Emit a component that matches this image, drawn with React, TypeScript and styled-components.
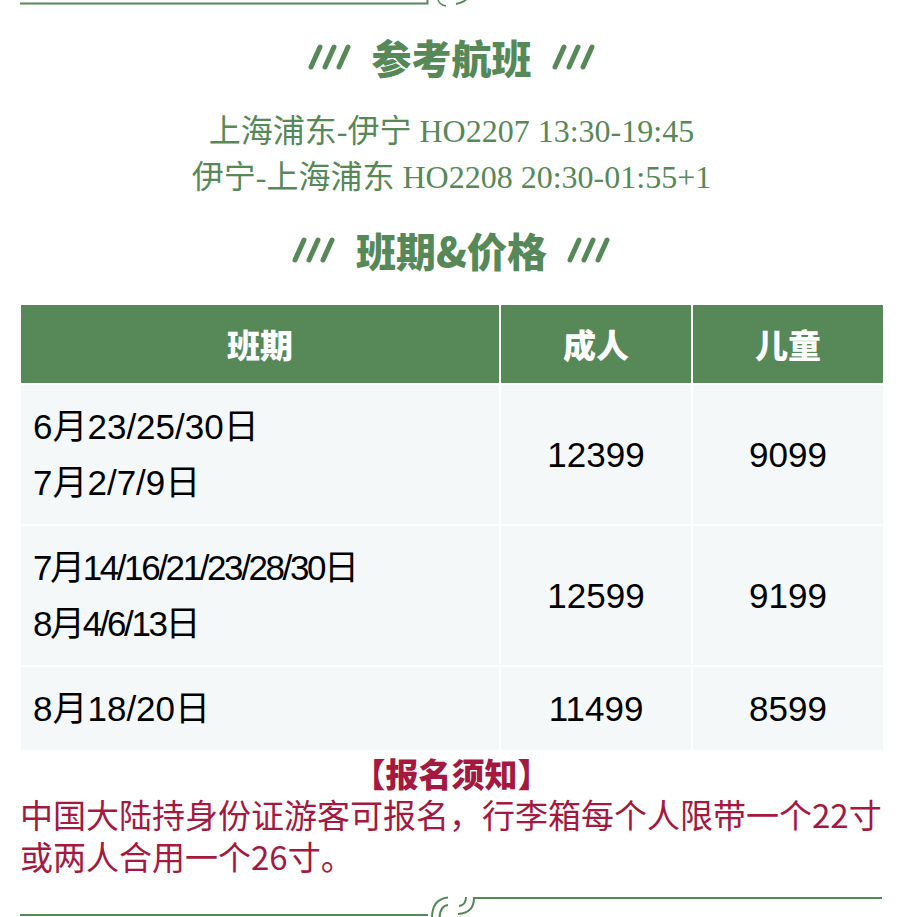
import React from "react";
import styled, { createGlobalStyle } from "styled-components";

const GREEN = "#568858";
const RED = "#a5183f";

const GlobalStyle = createGlobalStyle`
    body {
        margin: 0;
        background: #ffffff;
    }
`;

const Page = styled.div`
    width: 901px;
    padding: 0 18px 0 20px;
    box-sizing: border-box;
    font-family: "Noto Sans CJK SC", sans-serif;
`;

const Deco = styled.svg`
    display: block;
    margin-left: -20px;
`;

const Heading = styled.h2<{ $top: number }>`
    margin: ${(p) => p.$top}px 0 0;
    display: flex;
    align-items: center;
    justify-content: center;
    gap: 20px;
    height: 50px;
    color: ${GREEN};
    font-size: 40px;
    font-weight: 900;
    line-height: 50px;
`;

const Flights = styled.div`
    margin-top: 26px;
    text-align: center;
    color: ${GREEN};
    font-family: "Liberation Serif", "Noto Sans CJK SC", serif;
    font-size: 32px;
    line-height: 46px;
`;

const PriceTable = styled.div`
    margin: 30px 0 0 1px;
    width: 862px;
    display: grid;
    grid-template-columns: 478px 190px 190px;
    gap: 2px;
    font-family: "Liberation Sans", "Noto Sans CJK SC", sans-serif;
`;

const HeadCell = styled.div`
    height: 78px;
    background: ${GREEN};
    color: #ffffff;
    font-family: "Noto Sans CJK SC", sans-serif;
    font-size: 33px;
    font-weight: 900;
    display: flex;
    align-items: center;
    justify-content: center;
`;

const DateCell = styled.div<{ $tight?: boolean }>`
    background: #f4f8f8;
    color: #000000;
    padding: 14px 12px 13px;
    font-size: 35px;
    line-height: 56px;
    letter-spacing: ${(p) => (p.$tight ? "-2.4px" : "0")};
    white-space: nowrap;
`;

const PriceCell = styled.div`
    background: #f4f8f8;
    color: #000000;
    font-size: 35px;
    display: flex;
    align-items: center;
    justify-content: center;
`;

const NoticeTitle = styled.div`
    margin-top: 3px;
    height: 40px;
    display: flex;
    align-items: center;
    justify-content: center;
    color: ${RED};
    font-size: 33px;
    font-weight: 900;
    line-height: 1;
`;

const NoticeText = styled.div`
    color: ${RED};
    font-size: 33px;
    line-height: 42px;
    white-space: nowrap;
`;

const Slashes = () => (
    <svg width="44" height="26" viewBox="0 0 44 26">
        {[3, 17, 31].map((x) => (
            <line
                key={x}
                x1={x}
                y1={23}
                x2={x + 9}
                y2={3}
                stroke={GREEN}
                strokeWidth={5}
                strokeLinecap="round"
            />
        ))}
    </svg>
);

const rows = [
    { dates: ["6月23/25/30日", "7月2/7/9日"], adult: "12399", child: "9099", tight: false },
    { dates: ["7月14/16/21/23/28/30日", "8月4/6/13日"], adult: "12599", child: "9199", tight: true },
    { dates: ["8月18/20日"], adult: "11499", child: "8599", tight: false },
];

const App = () => {
    return (
        <Page>
            <GlobalStyle />
            <Deco width="901" height="8" viewBox="0 0 901 8">
                <path d="M20 3.5 H427.5 V0" fill="none" stroke={GREEN} strokeWidth={2} />
                <path d="M438 0 Q440 5 446 6" fill="none" stroke={GREEN} strokeWidth={1.5} />
                <path d="M456 4 Q462 3 466 0" fill="none" stroke={GREEN} strokeWidth={2} />
            </Deco>

            <Heading $top={24}>
                <Slashes />
                <span>参考航班</span>
                <Slashes />
            </Heading>

            <Flights>
                <div>上海浦东-伊宁 HO2207 13:30-19:45</div>
                <div>伊宁-上海浦东 HO2208 20:30-01:55+1</div>
            </Flights>

            <Heading $top={25}>
                <Slashes />
                <span>班期&amp;价格</span>
                <Slashes />
            </Heading>

            <PriceTable>
                <HeadCell>班期</HeadCell>
                <HeadCell>成人</HeadCell>
                <HeadCell>儿童</HeadCell>
                {rows.map((r) => (
                    <React.Fragment key={r.adult}>
                        <DateCell $tight={r.tight}>
                            {r.dates.map((d) => (
                                <div key={d}>{d}</div>
                            ))}
                        </DateCell>
                        <PriceCell>{r.adult}</PriceCell>
                        <PriceCell>{r.child}</PriceCell>
                    </React.Fragment>
                ))}
            </PriceTable>

            <NoticeTitle>【报名须知】</NoticeTitle>
            <NoticeText>
                中国大陆持身份证游客可报名，行李箱每个人限带一个22寸
                <br />
                或两人合用一个26寸。
            </NoticeText>

            <Deco width="901" height="41" viewBox="0 0 901 41">
                <g fill="none" stroke={GREEN} strokeWidth={2}>
                    <path d="M20 38 H428" />
                    <path d="M432 41 Q432 22 448 20.5" />
                    <path d="M439.5 41 Q440 29 448 28" />
                    <path d="M458 37 Q474 36 474 21 H882" />
                    <path d="M459 29 Q466 28 466 20" />
                </g>
            </Deco>
        </Page>
    );
};

export default App;
